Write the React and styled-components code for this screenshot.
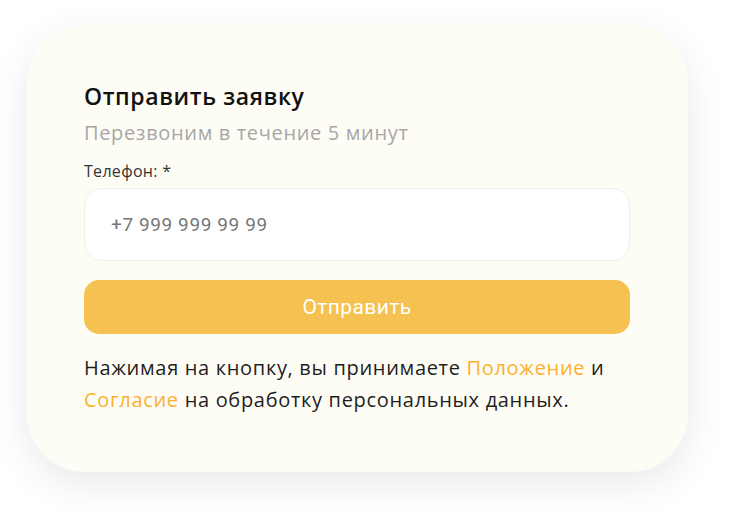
import React from "react";
import styled, { createGlobalStyle } from "styled-components";

const Global = createGlobalStyle`
  html, body {
    margin: 0;
    padding: 0;
    background: #ffffff;
  }
  body {
    font-family: "Open Sans", "Liberation Sans", sans-serif;
  }
`;

const Page = styled.div`
  width: 730px;
  height: 514px;
  padding: 25px 0 0 27px;
  box-sizing: border-box;
`;

const Card = styled.form`
  width: 661px;
  height: 447px;
  box-sizing: border-box;
  padding: 56px 58px 0 57px;
  background: #fefdf5;
  border-radius: 58px;
  box-shadow: 0 12px 40px rgba(0, 0, 0, 0.09);
  display: flex;
  flex-direction: column;
`;

const Title = styled.h2`
  margin: 0;
  font-size: 23px;
  line-height: 30px;
  font-weight: 600;
  letter-spacing: 0.6px;
  color: #111;
`;

const Subtitle = styled.p`
  margin: 8px 0 0;
  font-size: 20px;
  line-height: 28px;
  letter-spacing: 0.65px;
  color: #a7a7a7;
`;

const Label = styled.label`
  margin-top: 14px;
  font-size: 16px;
  line-height: 20px;
  letter-spacing: 0.3px;
  color: #333;
`;

const Input = styled.input`
  margin-top: 7px;
  height: 73px;
  box-sizing: border-box;
  padding: 0 26px;
  border: 1.5px solid #f1efe8;
  border-radius: 18px;
  background: #fff;
  font-family: Roboto, "Open Sans", sans-serif;
  font-size: 19px;
  letter-spacing: 0.6px;
  color: #333;
  outline: none;

  &::placeholder {
    color: #777;
  }
`;

const Submit = styled.button`
  margin-top: 19px;
  height: 54px;
  border: none;
  border-radius: 15px;
  background: #f5c150;
  color: #fff;
  font-family: Roboto, "Open Sans", sans-serif;
  font-size: 21px;
  letter-spacing: 0.4px;
  cursor: pointer;
`;

const Note = styled.p`
  margin: 18px 0 0;
  font-size: 20px;
  line-height: 32px;
  letter-spacing: 0.68px;
  color: #1e1e1e;
`;

const Link = styled.a`
  color: #fbb12e;
  text-decoration: none;
`;

export default function App() {
  return (
    <Page>
      <Global />
      <Card onSubmit={(e) => e.preventDefault()}>
        <Title>Отправить заявку</Title>
        <Subtitle>Перезвоним в течение 5 минут</Subtitle>
        <Label htmlFor="phone">Телефон: *</Label>
        <Input id="phone" type="tel" placeholder="+7 999 999 99 99" />
        <Submit type="submit">Отправить</Submit>
        <Note>
          Нажимая на кнопку, вы принимаете <Link href="#">Положение</Link> и{" "}
          <Link href="#">Согласие</Link> на обработку персональных данных.
        </Note>
      </Card>
    </Page>
  );
}
